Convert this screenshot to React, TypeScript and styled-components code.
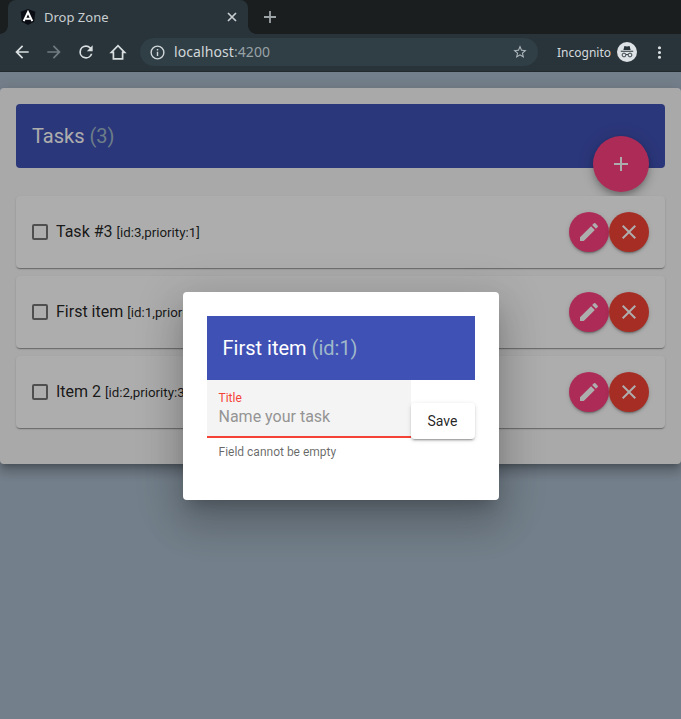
import React from 'react';
import styled, { createGlobalStyle } from 'styled-components';

const GlobalStyle = createGlobalStyle`
  * { box-sizing: border-box; }
  html, body { margin: 0; height: 100%; overflow: hidden; background: #aabbcc; }
  button { font: inherit; border: 0; padding: 0; background: none; color: inherit; }
  svg { display: block; flex: none; }
`;

const Window = styled.div`
  width: 681px;
  height: 719px;
  display: flex;
  flex-direction: column;
  overflow: hidden;
  font-family: Roboto, sans-serif;
`;

const TabStrip = styled.div`
  height: 34px;
  flex: none;
  display: flex;
  background: #1a1e1f;
  font-family: 'Noto Sans', sans-serif;
`;

const Tab = styled.div`
  position: relative;
  width: 240px;
  height: 34px;
  margin-left: 8px;
  padding: 0 11px 0 12px;
  display: flex;
  align-items: center;
  border-radius: 8px 8px 0 0;
  background: #29343a;
  color: #c8ced1;
  font-size: 13px;

  &::before, &::after {
    content: '';
    position: absolute;
    bottom: 0;
    width: 8px;
    height: 8px;
  }
  &::before { left: -8px; background: radial-gradient(circle at 0 0, #1a1e1f 7.5px, #29343a 8px); }
  &::after { right: -8px; background: radial-gradient(circle at 100% 0, #1a1e1f 7.5px, #29343a 8px); }
`;

const TabTitle = styled.span`
  margin-left: 8px;
  flex: 1;
`;

const NewTab = styled.button`
  width: 28px;
  height: 34px;
  margin-left: 8px;
  display: flex;
  align-items: center;
  justify-content: center;
`;

const NavBar = styled.div`
  height: 38px;
  flex: none;
  display: flex;
  align-items: center;
  padding: 0 0 1px 12px;
  background: #29343a;
  border-bottom: 1px solid #232a2e;
  font-family: 'Noto Sans', sans-serif;
`;

const NavButton = styled.button<{ $dim?: boolean }>`
  width: 20px;
  height: 20px;
  margin-right: 12px;
  display: flex;
  align-items: center;
  justify-content: center;
  color: ${p => (p.$dim ? '#6f7b80' : '#d9dfe1')};
`;

const Address = styled.div`
  width: 398px;
  height: 28px;
  padding: 0 10px 0 9px;
  display: flex;
  align-items: center;
  border-radius: 14px;
  background: #303e45;
  color: #d0d7da;
  font-size: 14px;
  line-height: 20px;
  letter-spacing: .08px;
`;

const Url = styled.span`
  flex: 1;
  margin-left: 8px;
`;

const Port = styled.span`
  color: #98a2a7;
`;

const Incognito = styled.div`
  margin-left: 19px;
  display: flex;
  align-items: center;
  gap: 6px;
  color: #d5dadd;
  font-size: 12px;
`;

const MenuButton = styled(NavButton)`
  margin: 0 0 0 12px;
`;

const Viewport = styled.main`
  position: relative;
  flex: 1;
  padding-top: 16px;
  background: #aabbcc;
`;

const Panel = styled.section`
  height: 376px;
  padding: 16px;
  border-radius: 4px;
  background: #fafafa;
  box-shadow: 0 5px 5px -3px rgba(0,0,0,.2), 0 8px 10px 1px rgba(0,0,0,.14), 0 3px 14px 2px rgba(0,0,0,.12);
`;

const Toolbar = styled.header<{ $rounded?: boolean }>`
  position: relative;
  height: 64px;
  padding: 0 16px;
  display: flex;
  align-items: center;
  border-radius: ${p => (p.$rounded ? '4px' : '0')};
  background: #3f51b5;
  color: #fff;
  font-size: 20px;
  line-height: 32px;
  white-space: pre;
`;

const Muted = styled.span`
  color: #9fb8c9;
`;

const RoundButton = styled.button<{ $color: string }>`
  width: 40px;
  height: 40px;
  display: flex;
  align-items: center;
  justify-content: center;
  border-radius: 50%;
  background: ${p => p.$color};
  color: #fff;
  box-shadow: 0 3px 1px -2px rgba(0,0,0,.2), 0 2px 2px rgba(0,0,0,.14), 0 1px 5px rgba(0,0,0,.12);
`;

const AddButton = styled(RoundButton)`
  position: absolute;
  right: 16px;
  bottom: -24px;
  width: 56px;
  height: 56px;
  box-shadow: 0 3px 5px -1px rgba(0,0,0,.2), 0 6px 10px rgba(0,0,0,.14), 0 1px 18px rgba(0,0,0,.12);
`;

const TaskList = styled.div`
  position: relative;
  margin-top: 28px;
  display: grid;
  gap: 8px;
`;

const TaskCard = styled.article`
  height: 72px;
  padding: 0 16px;
  display: flex;
  align-items: center;
  border-radius: 4px;
  background: #fff;
  box-shadow: 0 2px 1px -1px rgba(0,0,0,.2), 0 1px 1px rgba(0,0,0,.14), 0 1px 3px rgba(0,0,0,.12);
  color: rgba(0,0,0,.87);
  font-size: 16px;
  line-height: 24px;
`;

const Checkbox = styled.span`
  width: 16px;
  height: 16px;
  margin-right: 8px;
  border: 2px solid rgba(0,0,0,.54);
  border-radius: 2px;
`;

const TaskName = styled.span`
  flex: 1;
`;

const Meta = styled.small`
  font-size: 13.333px;
`;

const Backdrop = styled.div`
  position: absolute;
  inset: 0;
  display: flex;
  align-items: center;
  justify-content: center;
  background: rgba(0,0,0,.32);
`;

const Dialog = styled.div`
  width: 316px;
  height: 208px;
  padding: 24px;
  border-radius: 4px;
  background: #fff;
  box-shadow: 0 11px 15px -7px rgba(0,0,0,.2), 0 24px 38px 3px rgba(0,0,0,.14), 0 9px 46px 8px rgba(0,0,0,.12);
`;

const FormRow = styled.div`
  display: flex;
  align-items: flex-start;
`;

const Field = styled.div`
  width: 204px;
`;

const FieldBox = styled.div`
  height: 58px;
  padding: 10px 12px 0;
  background: #f4f4f4;
  border-bottom: 2px solid #f44336;
`;

const Label = styled.div`
  color: #f44336;
  font-size: 12px;
  line-height: 16px;
`;

const Placeholder = styled.div`
  color: #949494;
  font-size: 16px;
  line-height: 20px;
  margin-top: 1px;
`;

const Hint = styled.div`
  padding: 6px 12px;
  color: rgba(0,0,0,.6);
  font-size: 12px;
  line-height: 16px;
`;

const SaveButton = styled.button`
  width: 64px;
  height: 36px;
  margin-top: 23px;
  border-radius: 4px;
  background: #fff;
  color: rgba(0,0,0,.87);
  font-size: 14px;
  font-weight: 400;
  box-shadow: 0 3px 1px -2px rgba(0,0,0,.2), 0 2px 2px rgba(0,0,0,.14), 0 1px 5px rgba(0,0,0,.12);
`;

const paths = {
  back: 'M20 11H7.83l5.59-5.59L12 4l-8 8 8 8 1.41-1.41L7.83 13H20v-2z',
  forward: 'M12 4l-1.41 1.41L16.17 11H4v2h12.17l-5.58 5.59L12 20l8-8z',
  reload: 'M17.65 6.35A7.958 7.958 0 0 0 12 4a8 8 0 1 0 7.73 10h-2.08A6 6 0 1 1 12 6c1.66 0 3.14.69 4.22 1.78L13 11h7V4l-2.35 2.35z',
  pencil: 'M3 17.25V21h3.75L17.81 9.94l-3.75-3.75L3 17.25zM20.71 7.04a.996.996 0 0 0 0-1.41l-2.34-2.34a.996.996 0 0 0-1.41 0l-1.83 1.83 3.75 3.75 1.83-1.83z',
  close: 'M19 6.41L17.59 5 12 10.59 6.41 5 5 6.41 10.59 12 5 17.59 6.41 19 12 13.41 17.59 19 19 17.59 13.41 12z',
  add: 'M19 13h-6v6h-2v-6H5v-2h6V5h2v6h6v2z',
  info: 'M11 7h2v2h-2zm0 4h2v6h-2zm1-9a10 10 0 1 0 0 20 10 10 0 0 0 0-20zm0 18a8 8 0 1 1 0-16 8 8 0 0 1 0 16z',
  star: 'M22 9.24l-7.19-.62L12 2 9.19 8.63 2 9.24l5.46 4.73L5.82 21 12 17.27 18.18 21l-1.63-7.03L22 9.24zM12 15.4l-3.76 2.27 1-4.28-3.32-2.88 4.38-.38L12 6.1l1.71 4.04 4.38.38-3.32 2.88 1 4.28L12 15.4z',
  more: 'M12 8a2 2 0 1 0 0-4 2 2 0 0 0 0 4zm0 2a2 2 0 1 0 0 4 2 2 0 0 0 0-4zm0 6a2 2 0 1 0 0 4 2 2 0 0 0 0-4z',
};

function Icon({ name, size = 24, color = 'currentColor' }: { name: keyof typeof paths; size?: number; color?: string }) {
  return <svg width={size} height={size} viewBox="0 0 24 24" fill={color}><path d={paths[name]} /></svg>;
}

function AngularMark() {
  return (
    <svg width="16" height="16" viewBox="0 0 16 16">
      <path d="M8 0l7.3 2.7-1.1 10L8 16l-6.2-3.3-1.1-10z" fill="#0b0d14" />
      <path d="M3.7 12.2L8 3l4.3 9.2M5.7 9.7h4.6" fill="none" stroke="#fff" strokeWidth="2" />
    </svg>
  );
}

function IncognitoMark() {
  return (
    <svg width="20" height="20" viewBox="0 0 20 20">
      <circle cx="10" cy="10" r="10" fill="#dce2e6" />
      <path d="M6.4 8l1-4 2.6.6 2.6-.6 1 4zM3.8 8.7h12.4v1.1H3.8z" fill="#29343a" />
      <g fill="none" stroke="#29343a" strokeWidth="0.9">
        <circle cx="7" cy="13" r="1.9" />
        <circle cx="13" cy="13" r="1.9" />
        <path d="M9 12.7q1-.7 2 0" />
      </g>
    </svg>
  );
}

const tasks = [
  { id: 3, name: 'Task #3', priority: 1 },
  { id: 1, name: 'First item', priority: 2 },
  { id: 2, name: 'Item 2', priority: 3 },
];

export default function App() {
  return (
    <Window>
      <GlobalStyle />
      <TabStrip>
        <Tab>
          <AngularMark />
          <TabTitle>Drop Zone</TabTitle>
          <svg width="10" height="10" viewBox="0 0 10 10" stroke="#c8ced1" strokeWidth="1.7"><path d="M1 1l8 8M9 1L1 9" /></svg>
        </Tab>
        <NewTab><svg width="12" height="12" viewBox="0 0 12 12" stroke="#9da4a6" strokeWidth="1.8"><path d="M6 0v12M0 6h12" /></svg></NewTab>
      </TabStrip>
      <NavBar>
        <NavButton><Icon name="back" size={20} /></NavButton>
        <NavButton $dim><Icon name="forward" size={20} /></NavButton>
        <NavButton><Icon name="reload" size={20} /></NavButton>
        <NavButton>
          <svg width="18" height="18" viewBox="0 0 18 18" fill="none" stroke="currentColor" strokeWidth="1.7"><path d="M2.4 9.3L9 2.7l6.6 6.6h-2v6.6H4.4V9.3z" /></svg>
        </NavButton>
        <Address>
          <Icon name="info" size={17} />
          <Url>localhost<Port>:4200</Port></Url>
          <Icon name="star" size={16} color="#aeb8bc" />
        </Address>
        <Incognito>Incognito<IncognitoMark /></Incognito>
        <MenuButton><Icon name="more" size={19} /></MenuButton>
      </NavBar>
      <Viewport>
        <Panel>
          <Toolbar $rounded>
            <span>Tasks <Muted>(3)</Muted></span>
            <AddButton $color="#ff4081"><Icon name="add" /></AddButton>
          </Toolbar>
          <TaskList>
            {tasks.map(t => (
              <TaskCard key={t.id}>
                <Checkbox />
                <TaskName>{t.name} <Meta>[id:{t.id},priority:{t.priority}]</Meta></TaskName>
                <RoundButton $color="#ff4081"><Icon name="pencil" /></RoundButton>
                <RoundButton $color="#f44336"><Icon name="close" /></RoundButton>
              </TaskCard>
            ))}
          </TaskList>
        </Panel>
        <Backdrop>
          <Dialog>
            <Toolbar><span>First item <Muted>(id:1)</Muted></span></Toolbar>
            <FormRow>
              <Field>
                <FieldBox>
                  <Label>Title</Label>
                  <Placeholder>Name your task</Placeholder>
                </FieldBox>
                <Hint>Field cannot be empty</Hint>
              </Field>
              <SaveButton>Save</SaveButton>
            </FormRow>
          </Dialog>
        </Backdrop>
      </Viewport>
    </Window>
  );
}
